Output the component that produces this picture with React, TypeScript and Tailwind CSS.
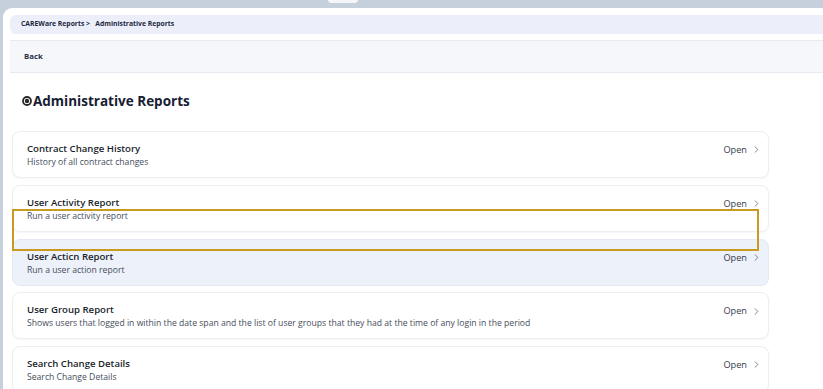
import { ChevronRight } from 'lucide-react';

const reports = [
  { title: 'Contract Change History', desc: 'History of all contract changes' },
  { title: 'User Activity Report', desc: 'Run a user activity report' },
  { title: 'User Acticn Report', desc: 'Run a user action report', active: true },
  {
    title: 'User Group Report',
    desc: 'Shows users that logged in within the date span and the list of user groups that they had at the time of any login in the period',
  },
  { title: 'Search Change Details', desc: 'Search Change Details' },
];

function ReportCard({ title, desc, active }: { title: string; desc: string; active?: boolean }) {
  return (
    <div
      className={`flex h-[47px] shrink-0 items-start justify-between rounded-[8px] border px-[14px] pt-[10px] ${
        active ? 'border-[#e3e8f2] bg-[#edf1f9]' : 'border-[#eceef3] bg-white shadow-[0_1px_2px_rgba(20,30,60,0.04)]'
      }`}
    >
      <div className="flex flex-col">
        <span className="text-[9.6px] font-semibold leading-[14px] text-[#1a1f2c]">{title}</span>
        <span className="text-[8.65px] leading-[13px] text-[#464d5b]">{desc}</span>
      </div>
      <div className="mt-[1px] mr-[-8px] flex items-center gap-[4px] text-[9.2px] text-[#353c4a]">
        <span>Open</span>
        <ChevronRight size={11} strokeWidth={1.5} className="text-[#4a505e]" />
      </div>
    </div>
  );
}

export default function App() {
  return (
    <div
      className="relative h-[389px] w-[823px] overflow-hidden bg-[#c6cfdc] pt-[8px] pl-[3px]"
      style={{ fontFamily: '"Open Sans", "Noto Sans", sans-serif' }}
    >
      <div className="absolute left-[328px] top-[-4px] h-[7px] w-[30px] rounded-full bg-[#f4f6fa]" />

      <div className="h-full rounded-tl-[9px] bg-white pt-[7px] pl-[7px]">
        <div className="flex h-[19px] items-center rounded-l-[6px] bg-[#eceffa] pl-[11px] text-[6.8px] font-bold text-[#1d2740]">
          CAREWare Reports &gt;&nbsp;&nbsp; Administrative Reports
        </div>

        <div className="mt-[6px] flex h-[33px] items-center border-y border-[#e7ebf1] bg-[#f5f7fb] pl-[14px] text-[7.8px] font-bold text-[#2a3346]">
          Back
        </div>

        <h1 className="mt-[18px] flex items-center pl-[12px] text-[13.5px] font-bold leading-[20px] text-[#172033]">
          <svg width="10" height="10" viewBox="0 0 10 10" className="mr-[1px]">
            <circle cx="5" cy="5" r="4" fill="none" stroke="#2a2a2a" strokeWidth="1.8" />
            <circle cx="5" cy="5" r="2.2" fill="#2a2a2a" />
          </svg>
          Administrative Reports
        </h1>

        <div className="mt-[20px] ml-[2px] flex w-[757px] flex-col gap-[6.75px]">
          {reports.map((r) => (
            <ReportCard key={r.title} {...r} />
          ))}
        </div>
      </div>

      <div className="absolute left-[12px] top-[209px] h-[42px] w-[747px] border-2 border-[#c99a22]" />
    </div>
  );
}
